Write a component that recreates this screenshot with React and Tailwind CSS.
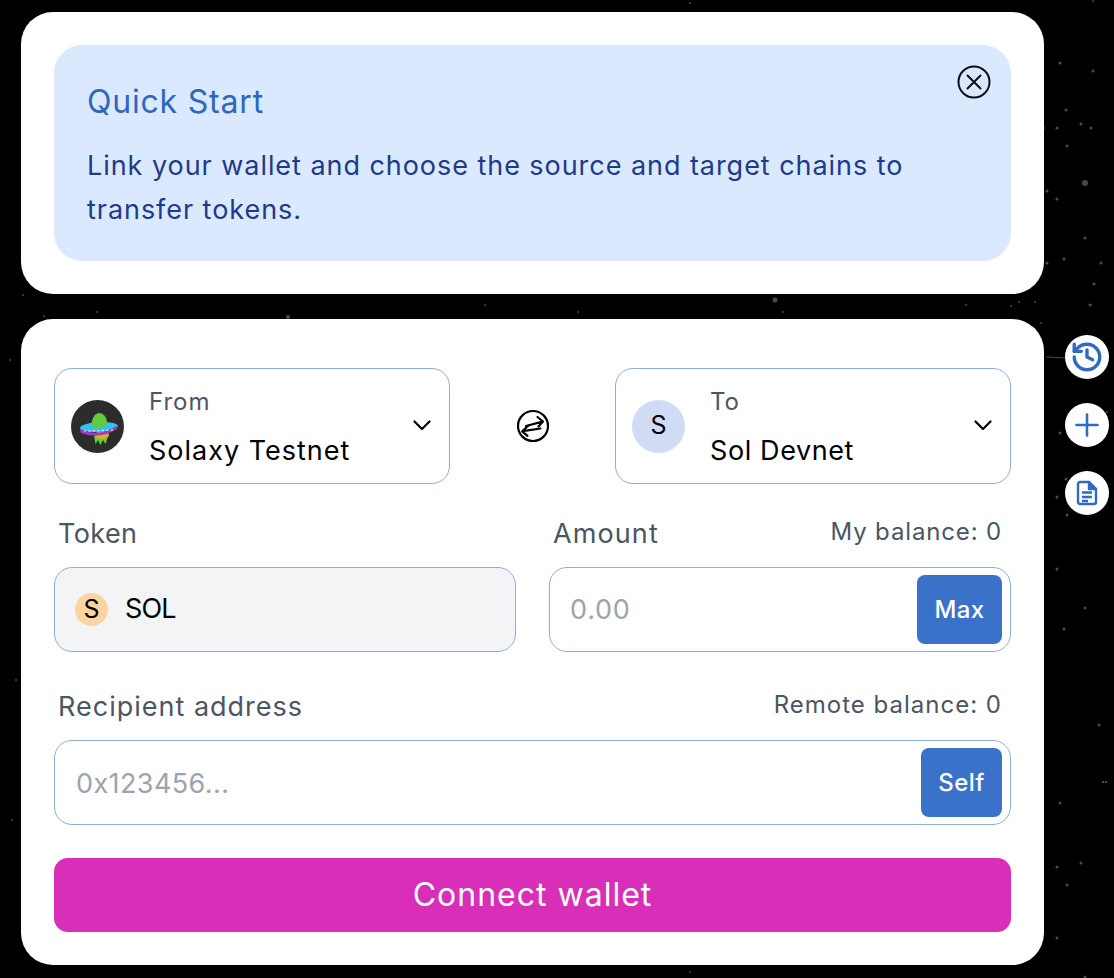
import React from 'react';
import { History, Plus } from 'lucide-react';

const stars = [
  [1060, 63, 1.5], [1093, 71, 1.5], [1093, 1, 1], [1066, 110, 1.5], [1044, 128, 1], [1057, 128, 1.5], [1081, 124, 1.5],
  [1091, 128, 1.5], [1067, 146, 1.5], [1085, 183, 3], [1047, 191, 1.5], [1057, 199, 1.5], [1085, 238, 1.5],
  [1047, 263, 1.5], [1064, 259, 1.5], [1101, 263, 1.5], [1094, 284, 1.5], [1090, 305, 1.5], [1041, 323, 1],
  [23, 295, 1], [44, 316, 1], [97, 312, 1], [288, 317, 2], [485, 305, 1], [578, 312, 1], [775, 300, 2.5],
  [783, 312, 1], [966, 305, 1], [1011, 306, 1], [1019, 302, 1], [1035, 302, 1], [1091, 305, 1],
  [1107, 412, 1], [1060, 433, 1.5], [1066, 479, 1.5], [1057, 497, 1.5], [1067, 515, 1.5],
  [1057, 569, 1.5], [1085, 608, 1.5], [1064, 629, 1.5], [1099, 725, 1.5], [1103, 782, 1.2], [1106, 782, 1.2],
  [1060, 803, 1.5], [1057, 867, 1.5], [1081, 863, 1.5], [1067, 885, 1.5], [1057, 938, 1.5], [1085, 977, 1.5],
  [690, 3, 1], [16, 680, 1], [10, 360, 1], [12, 820, 1], [690, 972, 1],
];

const inputBorder = 'border border-[#8fadd3]';

function SwapIcon() {
  return (
    <svg width="34" height="34" viewBox="0 0 34 34" fill="none" stroke="#000" strokeWidth="2.2" strokeLinecap="round" strokeLinejoin="round">
      <circle cx="17" cy="17" r="15" />
      <path d="M10 17 L26.5 12.6 M21.5 8 L27 12.5 L22.5 17.5" />
      <path d="M24.5 19.5 L7 22.2 M12 17 L6.2 22.3 L11.5 26.8" />
    </svg>
  );
}

function CloseIcon() {
  return (
    <svg width="34" height="34" viewBox="0 0 34 34" fill="none" stroke="#0b0f1a" strokeWidth="2" strokeLinecap="round">
      <circle cx="17" cy="17" r="15.5" />
      <path d="M10.5 10.5 L23.5 23.5 M23.5 10.5 L10.5 23.5" />
    </svg>
  );
}

function Chevron() {
  return (
    <svg width="18" height="11" viewBox="0 0 18 11" fill="none" stroke="#000" strokeWidth="2.2" strokeLinecap="round" strokeLinejoin="round" className="mb-[2px] shrink-0">
      <path d="M1.5 1.5 L9 9 L16.5 1.5" />
    </svg>
  );
}

function FileIcon() {
  return (
    <svg width="22" height="26" viewBox="0 0 22 26" fill="none" stroke="currentColor" strokeWidth="2.4" strokeLinecap="round" strokeLinejoin="round">
      <path d="M4 2 H13 L20 9 V22 a2 2 0 0 1 -2 2 H4 a2 2 0 0 1 -2 -2 V4 a2 2 0 0 1 2 -2 Z" />
      <path d="M13 2 V9 H20 Z" fill="currentColor" />
      <path d="M6 12.5 H16 M6 17 H16 M6 21 H12" strokeLinecap="butt" />
    </svg>
  );
}

function UfoLogo() {
  return (
    <svg width="53" height="53" viewBox="0 0 53 53" className="shrink-0">
      <circle cx="26.5" cy="26.5" r="26.5" fill="#2c2c2c" />
      <path d="M23 36 L24.5 44 L27 40 L29.5 45 L32 40 L34.5 44 L37 36 Z" fill="#4fdc3a" />
      <ellipse cx="31" cy="35" rx="7" ry="4" fill="#f0a22e" />
      <ellipse cx="28" cy="27" rx="19" ry="5" transform="rotate(-3 28 27)" fill="#33c3e8" />
      <path d="M9 29 Q28 38 47 25 L46 29 Q28 40 10 33 Z" fill="#9a3cc4" />
      <path d="M13 31 L43 30" stroke="#e6e6e6" strokeWidth="1.2" strokeDasharray="2 2.5" />
      <path d="M20.5 26 A8 12 0 0 1 36.5 24 Q29 30 20.5 26 Z" fill="#63c93f" />
    </svg>
  );
}

function ChainSelect({ label, name, icon, nameTracking }) {
  return (
    <div className={`flex h-[116px] w-[396px] items-center rounded-[18px] pl-4 pr-[18px] ${inputBorder}`}>
      {icon}
      <div className="ml-[25px] flex-1">
        <div className="text-[24px] leading-[32px] tracking-[1px] text-[#4b5563]">{label}</div>
        <div className={`mt-[17px] text-[27px] leading-[32px] text-black ${nameTracking}`}>{name}</div>
      </div>
      <Chevron />
    </div>
  );
}

function SideButton({ children }) {
  return (
    <button className="flex h-11 w-11 items-center justify-center rounded-full bg-white text-[#2f6bc4]">
      {children}
    </button>
  );
}

export default function App() {
  return (
    <div
      className="relative h-[978px] w-[1114px] overflow-hidden bg-black text-black"
      style={{ fontFamily: '"Inter", "Liberation Sans", sans-serif' }}
    >
      <svg className="absolute inset-0" width="1114" height="978">
        {stars.map(([x, y, r], i) => (
          <circle key={i} cx={x} cy={y} r={r} fill="#4a4a4a" />
        ))}
        <path d="M1046 357 L1066 358" stroke="#4a4a4a" strokeWidth="1" />
      </svg>

      <div className="relative flex items-start pl-[21px] pt-3">
        <div className="flex w-[1023px] flex-col gap-[25px]">
          <section className="rounded-[32px] bg-white p-[33px]">
            <div className="relative h-[216px] rounded-[28px] bg-[#dbe9fe] pl-[33px] pr-8 pt-[38px]">
              <button className="absolute right-[20px] top-[20px]">
                <CloseIcon />
              </button>
              <h2 className="text-[32px] leading-[38px] tracking-[0.8px] text-[#2f67bd]">Quick Start</h2>
              <p className="mt-[23px] text-[27px] leading-[44px] tracking-[0.95px] text-[#1e3a8a]">
                Link your wallet and choose the source and target chains to transfer tokens.
              </p>
            </div>
          </section>

          <section className="rounded-[32px] bg-white px-[33px] pb-[33px] pt-[49px]">
            <div className="flex items-center justify-between">
              <ChainSelect label="From" name="Solaxy Testnet" nameTracking="tracking-[1px]" icon={<UfoLogo />} />
              <SwapIcon />
              <ChainSelect
                label="To"
                name="Sol Devnet"
                nameTracking="tracking-[0.6px]"
                icon={
                  <div className="flex h-[53px] w-[53px] shrink-0 items-center justify-center rounded-full bg-[#cfdcf4] text-[25px]">
                    S
                  </div>
                }
              />
            </div>

            <div className="mt-[32px] grid grid-cols-2 gap-x-[33px]">
              <div>
                <div className="pl-1 text-[27px] leading-[36px] tracking-[0.4px] text-[#4b5563]">Token</div>
                <div className={`mt-[15px] flex h-[85px] items-center rounded-[18px] bg-[#f3f4f6] pl-5 ${inputBorder}`}>
                  <div className="flex h-[33px] w-[33px] items-center justify-center rounded-full bg-[#fdd3a0] text-[25px]">
                    S
                  </div>
                  <span className="ml-[17px] text-[27px] tracking-[-0.8px]">SOL</span>
                </div>
              </div>
              <div>
                <div className="flex items-center justify-between pl-1 pr-[9px]">
                  <span className="text-[27px] leading-[36px] tracking-[1.1px] text-[#4b5563]">Amount</span>
                  <span className="mb-1 text-[24px] leading-[32px] tracking-[0.85px] text-[#4b5563]">My balance: 0</span>
                </div>
                <div className={`mt-[15px] flex h-[85px] items-center justify-between rounded-[18px] pl-5 pr-2 ${inputBorder}`}>
                  <span className="pt-px text-[27px] tracking-[0.8px] text-[#9ca3af]">0.00</span>
                  <button className="h-[69px] w-[85px] rounded-[8px] bg-[#3b72c9] text-[24px] font-medium tracking-[0.3px] text-white">Max</button>
                </div>
              </div>
            </div>

            <div className="mt-[37px] flex items-center justify-between pl-1 pr-[9px]">
              <span className="text-[27px] leading-[36px] tracking-[1px] text-[#4b5563]">Recipient address</span>
              <span className="mb-1 text-[24px] leading-[32px] tracking-[1px] text-[#4b5563]">Remote balance: 0</span>
            </div>
            <div className={`mt-[15px] flex h-[85px] items-center justify-between rounded-[18px] pl-[21px] pr-2 ${inputBorder}`}>
              <span className="pt-[3px] text-[27px] tracking-[0.4px] text-[#9ca3af]">0x123456...</span>
              <button className="h-[69px] w-[81px] rounded-[8px] bg-[#3b72c9] text-[24px] font-medium tracking-[0.4px] text-white">Self</button>
            </div>

            <button className="mt-[33px] h-[74px] w-full rounded-[14px] bg-[#d92fb8] text-[32px] tracking-[1px] text-white">
              Connect wallet
            </button>
          </section>
        </div>

        <div className="ml-[21px] mt-[323px] flex flex-col gap-6">
          <SideButton><History size={34} strokeWidth={2.4} /></SideButton>
          <SideButton><Plus size={36} strokeWidth={1.7} /></SideButton>
          <SideButton><FileIcon /></SideButton>
        </div>
      </div>
    </div>
  );
}
